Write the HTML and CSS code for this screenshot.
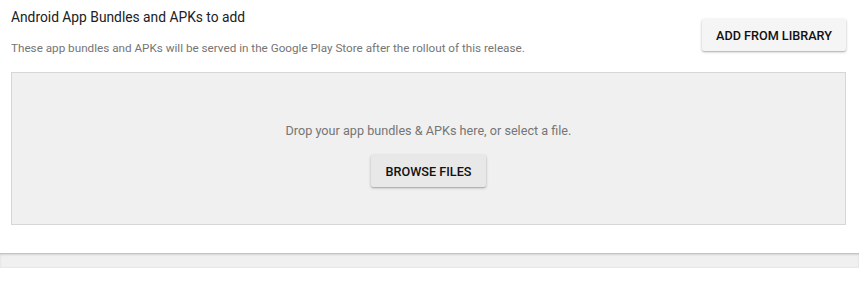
FILE: index.html
```html
<!DOCTYPE html>
<html>
<head>
<meta charset="utf-8">
<link rel="stylesheet" href="styles.css">
</head>
<body>
<section class="card">
  <div class="header">
    <div class="titles">
      <h2 class="title">Android App Bundles and APKs to add</h2>
      <p class="subtitle">These app bundles and APKs will be served in the Google Play Store after the rollout of this release.</p>
    </div>
    <button class="btn btn-library">ADD FROM LIBRARY</button>
  </div>
  <div class="dropzone">
    <p class="drop-text">Drop your app bundles &amp; APKs here, or select a file.</p>
    <button class="btn btn-browse">BROWSE FILES</button>
  </div>
</section>
<div class="footer-band"></div>
</body>
</html>
```

FILE: styles.css
```css
html, body {
  margin: 0;
  padding: 0;
  background: #ffffff;
  font-family: Roboto, "Liberation Sans", Arial, sans-serif;
}
.card {
  padding: 0 13px 0 11px;
  height: 253px;
  box-sizing: border-box;
}
.header {
  display: flex;
  justify-content: space-between;
  align-items: flex-start;
  height: 72px;
}
.title {
  margin: 0;
  padding-top: 8px;
  font-size: 13.8px;
  font-weight: 400;
  line-height: 18px;
  color: #202124;
}
.subtitle {
  margin: 0;
  padding-top: 14px;
  font-size: 11.7px;
  line-height: 16px;
  color: #757575;
}
.btn {
  font-family: Roboto, "Liberation Sans", Arial, sans-serif;
  font-size: 12.65px;
  font-weight: 500;
  color: #111111;
  border: none;
  border-radius: 2px;
  cursor: pointer;
  height: 32px;
  padding: 0;
  box-shadow: 0 1px 3px rgba(0,0,0,0.25), 0 1px 1px rgba(0,0,0,0.12);
}
.btn-library {
  margin-top: 19px;
  width: 144px;
  background: #f5f5f5;
}
.dropzone {
  height: 153px;
  box-sizing: border-box;
  border: 1px solid #d6d6d6;
  background: #f0f0f0;
  display: flex;
  flex-direction: column;
  align-items: center;
  padding-top: 49px;
}
.drop-text {
  margin: 0;
  font-size: 12.65px;
  line-height: 18px;
  color: #757575;
}
.btn-browse {
  margin-top: 15px;
  width: 115px;
  background: #e8e8e8;
}
.footer-band {
  height: 13px;
  background: #f0f0f0;
  border-top: 1px solid #c4c4c4;
  box-shadow: inset 0 1px 2px rgba(0,0,0,0.12);
  border-bottom: 1px solid #e8e8e8;
}
```
